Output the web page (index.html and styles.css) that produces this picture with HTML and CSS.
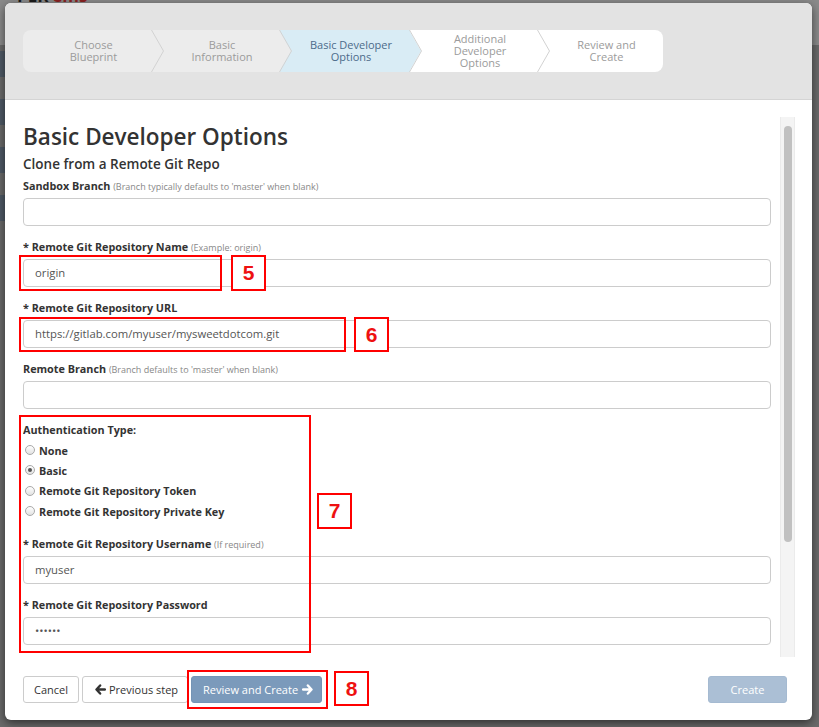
FILE: index.html
```html
<!DOCTYPE html>
<html>
<head>
<meta charset="utf-8">
<title>Basic Developer Options</title>
<link rel="stylesheet" href="styles.css">
</head>
<body>
<div class="app">
  <div class="app-top"><span class="logo">PER<span class="logo-red">Cms</span></span></div>
  <div class="app-side">
    <div class="side-item"></div>
    <div class="side-item"></div>
    <div class="side-item"></div>
    <div class="side-item"></div>
  </div>
</div>

<div class="modal">
  <div class="modal-header">
    <div class="stepper">
      <div class="step done first s1"><div class="step-text"><div>Choose</div><div>Blueprint</div></div>
        <svg class="chev" viewBox="0 0 13 42" width="13" height="42"><polygon points="0,0 12,21 0,42" fill="#ececec"/><polyline points="0.5,0 12.5,21 0.5,42" fill="none" stroke="#d2d2d2" stroke-width="1"/></svg>
      </div>
      <div class="step done s2"><div class="step-text"><div>Basic</div><div>Information</div></div>
        <svg class="chev" viewBox="0 0 13 42" width="13" height="42"><polygon points="0,0 12,21 0,42" fill="#ececec"/><polyline points="0.5,0 12.5,21 0.5,42" fill="none" stroke="#d2d2d2" stroke-width="1"/></svg>
      </div>
      <div class="step active s3"><div class="step-text"><div>Basic Developer</div><div>Options</div></div>
        <svg class="chev" viewBox="0 0 13 42" width="13" height="42"><polygon points="0,0 12,21 0,42" fill="#d9ecf5"/><polyline points="0.5,0 12.5,21 0.5,42" fill="none" stroke="#d2d2d2" stroke-width="1"/></svg>
      </div>
      <div class="step todo s4"><div class="step-text"><div>Additional</div><div>Developer</div><div>Options</div></div>
        <svg class="chev" viewBox="0 0 13 42" width="13" height="42"><polygon points="0,0 12,21 0,42" fill="#ffffff"/><polyline points="0.5,0 12.5,21 0.5,42" fill="none" stroke="#d2d2d2" stroke-width="1"/></svg>
      </div>
      <div class="step todo last s5"><div class="step-text"><div>Review and</div><div>Create</div></div></div>
    </div>
  </div>

  <div class="modal-body">
    <div class="content">
      <h1 class="title">Basic Developer Options</h1>
      <h2 class="subtitle">Clone from a Remote Git Repo</h2>

      <div class="field">
        <div class="label">Sandbox Branch <span class="hint">(Branch typically defaults to 'master' when blank)</span></div>
        <div class="input"></div>
      </div>

      <div class="field">
        <div class="label">* Remote Git Repository Name <span class="hint">(Example: origin)</span></div>
        <div class="input">origin</div>
      </div>

      <div class="field">
        <div class="label">* Remote Git Repository URL</div>
        <div class="input">https://gitlab.com/myuser/mysweetdotcom.git</div>
      </div>

      <div class="field">
        <div class="label">Remote Branch <span class="hint">(Branch defaults to 'master' when blank)</span></div>
        <div class="input"></div>
      </div>

      <div class="auth">
        <div class="label auth-label">Authentication Type:</div>
        <div class="radio-row"><span class="radio"></span>None</div>
        <div class="radio-row"><span class="radio checked"></span>Basic</div>
        <div class="radio-row"><span class="radio"></span>Remote Git Repository Token</div>
        <div class="radio-row"><span class="radio"></span>Remote Git Repository Private Key</div>
      </div>

      <div class="field">
        <div class="label">* Remote Git Repository Username <span class="hint">(If required)</span></div>
        <div class="input">myuser</div>
      </div>

      <div class="field">
        <div class="label">* Remote Git Repository Password</div>
        <div class="input pw">••••••</div>
      </div>
    </div>
    <div class="scrollbar"><div class="thumb"></div></div>
  </div>

  <div class="modal-footer">
    <button class="btn btn-cancel">Cancel</button>
    <button class="btn btn-prev"><svg class="ico" viewBox="0 0 12 12" width="11" height="11"><path d="M5.6 1.6 L1.6 6 L5.6 10.4 M2.2 6 H10.8" fill="none" stroke="#333" stroke-width="2.6" stroke-linecap="round" stroke-linejoin="round"/></svg><span>Previous step</span></button>
    <button class="btn btn-primary btn-review"><span>Review and Create</span><svg class="ico ico-r" viewBox="0 0 12 12" width="11" height="11"><path d="M6.4 1.6 L10.4 6 L6.4 10.4 M9.8 6 H1.2" fill="none" stroke="#fff" stroke-width="2.6" stroke-linecap="round" stroke-linejoin="round"/></svg></button>
    <span class="spacer"></span>
    <button class="btn btn-primary btn-disabled">Create</button>
  </div>

  <div class="mark box-origin"></div>
  <div class="mark num num5">5</div>
  <div class="mark box-url"></div>
  <div class="mark num num6">6</div>
  <div class="mark box-auth"></div>
  <div class="mark num num7">7</div>
  <div class="mark box-review"></div>
  <div class="mark num num8">8</div>
</div>
</body>
</html>
```
FILE: styles.css
```css
* { box-sizing: border-box; }
html, body { margin: 0; padding: 0; }
body {
  width: 819px;
  height: 727px;
  overflow: hidden;
  position: relative;
  background: #6a6a6a;
  font-family: "Open Sans", "Noto Sans", sans-serif;
  color: #333;
}

/* dimmed app behind the modal */
.app-top {
  height: 45px;
  background: #8a8a8a;
  padding-left: 17px;
  overflow: hidden;
}
.logo {
  display: block;
  font-size: 17px;
  font-weight: 700;
  line-height: 18px;
  color: #1c1c1c;
  margin-top: -13px;
}
.logo-red { color: #8a2222; margin-left: 3px; }
.app-side {
  width: 60px;
  padding-top: 6px;
  display: flex;
  flex-direction: column;
  gap: 22px;
}
.side-item {
  height: 26px;
  background: #4f5a66;
}

/* modal */
.modal {
  position: absolute;
  left: 5px;
  top: 3px;
  width: 807px;
  height: 717px;
  background: #fff;
  border-radius: 6px;
  box-shadow: 0 3px 10px rgba(0, 0, 0, 0.55);
  display: flex;
  flex-direction: column;
  overflow: hidden;
}
.modal-header {
  flex: none;
  height: 97px;
  background: #e3e3e3;
  border-bottom: 1px solid #d4d4d4;
  padding: 27px 0 0 18px;
}

.stepper {
  display: flex;
  height: 42px;
}
.step {
  position: relative;
  flex: none;
  height: 42px;
  display: flex;
  align-items: center;
  justify-content: center;
  text-align: center;
  padding-left: 12px;
  font-size: 11px;
  color: #9b9b9b;
}
.step-text { line-height: 12px; white-space: nowrap; }
.step.done { background: #ececec; }
.step.active { background: #d9ecf5; color: #4c6b8a; }
.step.todo { background: #fff; }
.step.first { border-radius: 8px 0 0 8px; }
.step.last { border-radius: 0 8px 8px 0; }
.s1 { width: 129px; }
.s2 { width: 128px; }
.s3 { width: 130px; }
.s4 { width: 128px; }
.s5 { width: 125px; }
.chev {
  position: absolute;
  right: -12px;
  top: 0;
  z-index: 2;
  display: block;
}

/* body */
.modal-body {
  flex: none;
  height: 560px;
  display: flex;
  padding: 0 17px 0 18px;
}
.content {
  flex: 1;
  overflow: hidden;
  padding-top: 24px;
}
.title {
  margin: 0;
  height: 26px;
  font-size: 22.5px;
  line-height: 26px;
  font-weight: 600;
  color: #333;
}
.subtitle {
  margin: 5px 0 6px;
  height: 18px;
  font-size: 13.5px;
  line-height: 18px;
  font-weight: 600;
  color: #333;
}
.field { margin-bottom: 14px; }
.label {
  height: 14px;
  font-size: 10.8px;
  line-height: 14px;
  font-weight: 700;
  color: #333;
  margin-bottom: 5px;
  white-space: nowrap;
}
.hint {
  font-size: 9px;
  line-height: 10px;
  font-weight: 400;
  color: #888;
}
.input {
  height: 28px;
  border: 1px solid #cccccc;
  border-radius: 4px;
  padding-left: 11px;
  font-size: 11.3px;
  line-height: 26px;
  color: #555;
}

.auth { margin-bottom: 16px; }
.auth-label { margin-bottom: 3px; }
.radio-row {
  height: 20.33px;
  display: flex;
  align-items: center;
  font-size: 10.8px;
  font-weight: 700;
  color: #333;
  padding-left: 2px;
}
.radio {
  width: 10px;
  height: 10px;
  border-radius: 50%;
  border: 1px solid #a9a9a9;
  background: linear-gradient(#ffffff, #e2e2e2);
  margin-right: 4px;
  display: flex;
  align-items: center;
  justify-content: center;
}
.radio.checked::after {
  content: "";
  width: 4px;
  height: 4px;
  border-radius: 50%;
  background: #555;
}

.scrollbar {
  flex: none;
  width: 15px;
  height: 540px;
  margin: 17px 0 0 9px;
  background: #f4f4f4;
  border-left: 1px solid #ebebeb;
  border-right: 1px solid #ebebeb;
  padding: 9px 2px 0 3px;
}
.thumb {
  width: 8px;
  height: 416px;
  background: #c1c1c1;
  border-radius: 4px;
}

/* footer */
.modal-footer {
  flex: 1;
  display: flex;
  align-items: flex-start;
  gap: 3px;
  padding: 16px 25px 0 18px;
}
.spacer { flex: 1; }
.btn {
  height: 27px;
  border: 1px solid #cccccc;
  border-radius: 3px;
  background: #fff;
  font-family: "Open Sans", "Noto Sans", sans-serif;
  font-size: 11px;
  color: #333;
  padding: 0 11px;
  display: flex;
  align-items: center;
  gap: 3px;
  white-space: nowrap;
  cursor: pointer;
}
.btn-cancel { width: 56px; justify-content: center; padding: 0; }
.btn-prev { width: 106px; padding-left: 12px; }
.btn-primary {
  background: #7b9abb;
  border-color: #7494b5;
  color: #fff;
}
.btn-review { width: 131px; padding-left: 11px; }
.btn-disabled {
  width: 79px;
  justify-content: center;
  background: #abbfd5;
  border-color: #a5bad1;
}
.ico { display: block; flex: none; }
.ico-r { margin-left: 1px; }

/* red annotation overlays */
.mark {
  position: absolute;
  border: 2px solid #f00;
  z-index: 5;
}
.num {
  background: #fff;
  width: 35px;
  height: 36px;
  display: flex;
  align-items: center;
  justify-content: center;
  font-family: "Liberation Sans", Arial, sans-serif;
  font-weight: 700;
  font-size: 21px;
  color: #ee1111;
}
.box-origin { left: 14px; top: 252px; width: 203px; height: 36px; }
.num5 { left: 226px; top: 252px; }
.box-url { left: 14px; top: 314px; width: 327px; height: 35px; }
.num6 { left: 349px; top: 314px; height: 35px; }
.box-auth { left: 14px; top: 412px; width: 292px; height: 238px; }
.num7 { left: 312px; top: 490px; }
.box-review { left: 182px; top: 667px; width: 141px; height: 39px; }
.num8 { left: 329px; top: 668px; height: 35px; }
```
